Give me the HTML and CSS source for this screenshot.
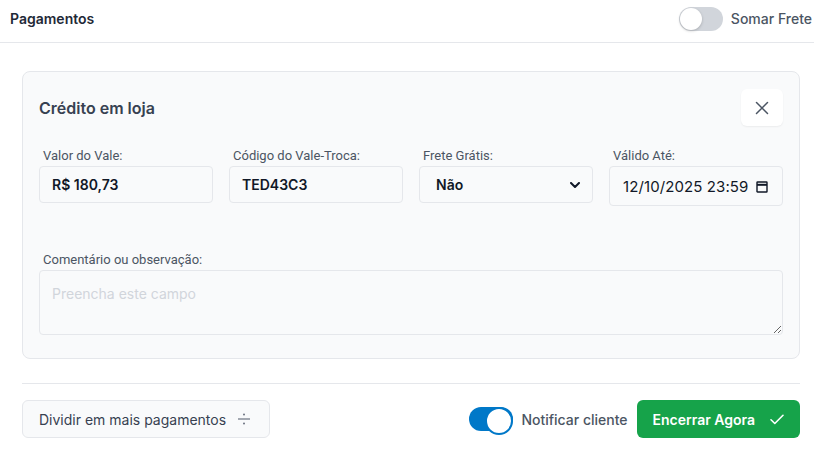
FILE: index.html
```html
<!DOCTYPE html>
<html lang="pt-BR">
<head>
    <meta charset="UTF-8">
    <meta name="viewport" content="width=device-width, initial-scale=1.0">
    <title>Pagamentos</title>
    <link rel="stylesheet" href="styles.css">
</head>
<body>
    <header class="topbar">
        <h2 class="topbar-title">Pagamentos</h2>
        <label class="switch-row">
            <span class="switch"></span>
            <span class="switch-label">Somar Frete</span>
        </label>
    </header>

    <main class="content">
        <section class="card">
            <div class="card-head">
                <h3 class="card-title">Crédito em loja</h3>
                <button class="close-btn" type="button" aria-label="Fechar">
                    <svg width="14" height="14" viewBox="0 0 14 14" fill="none" stroke="#4b5563" stroke-width="1.5" stroke-linecap="round">
                        <path d="M1.5 1.5l11 11M12.5 1.5l-11 11"/>
                    </svg>
                </button>
            </div>

            <div class="fields">
                <div class="field">
                    <label>Valor do Vale:</label>
                    <input class="input" type="text" value="R$ 180,73">
                </div>
                <div class="field">
                    <label>Código do Vale-Troca:</label>
                    <input class="input" type="text" value="TED43C3">
                </div>
                <div class="field">
                    <label>Frete Grátis:</label>
                    <div class="select-wrap">
                        <select class="input">
                            <option>Não</option>
                            <option>Sim</option>
                        </select>
                        <svg class="chevron" width="10" height="6" viewBox="0 0 10 6" fill="none" stroke="#111827" stroke-width="2" stroke-linecap="round" stroke-linejoin="round">
                            <path d="M1 1l4 4 4-4"/>
                        </svg>
                    </div>
                </div>
                <div class="field">
                    <label>Válido Até:</label>
                    <div class="input date-input">
                        <span class="date-value">12/10/2025 23:59</span>
                        <svg width="12" height="13" viewBox="0 0 12 13" fill="none" stroke="#111827" stroke-width="1.4">
                            <rect x="1" y="2" width="10" height="10" rx="0.5"/>
                            <path d="M1 4.8h10" stroke-width="2"/>
                        </svg>
                    </div>
                </div>
            </div>

            <div class="field comment">
                <label>Comentário ou observação:</label>
                <textarea class="input textarea" placeholder="Preencha este campo"></textarea>
            </div>
        </section>

        <hr class="divider">

        <footer class="actions">
            <button class="btn btn-light" type="button">
                Dividir em mais pagamentos
                <svg width="12" height="12" viewBox="0 0 12 12" fill="#6b7280">
                    <rect x="0" y="5.4" width="12" height="1.2"/>
                    <circle cx="6" cy="1.6" r="1"/>
                    <circle cx="6" cy="10.4" r="1"/>
                </svg>
            </button>
            <div class="actions-right">
                <label class="switch-row">
                    <span class="switch on"></span>
                    <span class="switch-label">Notificar cliente</span>
                </label>
                <button class="btn btn-green" type="button">
                    Encerrar Agora
                    <svg width="14" height="11" viewBox="0 0 14 11" fill="none" stroke="#fff" stroke-width="1.6" stroke-linecap="round" stroke-linejoin="round">
                        <path d="M1 5.8l3.8 3.7L13 1.3"/>
                    </svg>
                </button>
            </div>
        </footer>
    </main>
</body>
</html>
```

FILE: styles.css
```css
* {
    box-sizing: border-box;
}
body {
    margin: 0;
    font-family: Inter, "Noto Sans", sans-serif;
    color: #374151;
    background: #fff;
}
.topbar {
    display: flex;
    align-items: center;
    justify-content: space-between;
    height: 43px;
    padding: 0 2px 5px 10px;
    border-bottom: 1px solid #e5e7eb;
}
.topbar-title {
    margin: 0;
    font-size: 14px;
    font-weight: 600;
    color: #1f2937;
}
.switch-row {
    display: flex;
    align-items: center;
    gap: 8px;
}
.switch {
    position: relative;
    width: 44px;
    height: 24px;
    border-radius: 12px;
    background: #d1d5db;
}
.switch::after {
    content: "";
    position: absolute;
    top: 1px;
    left: 1px;
    width: 22px;
    height: 22px;
    border-radius: 50%;
    background: #fff;
    box-shadow: 0 1px 3px rgba(0, 0, 0, 0.2);
}
.switch.on {
    background: #0078c8;
}
.switch.on::after {
    top: 0;
    left: auto;
    right: 0;
    width: 24px;
    height: 24px;
    border: 2px solid #0078c8;
    box-shadow: none;
}
.switch-label {
    font-size: 14px;
    font-weight: 500;
    color: #4b5563;
}
.content {
    padding: 28px 14px 0 22px;
}
.card {
    background: #f9fafb;
    border: 1px solid #e5e7eb;
    border-radius: 8px;
    padding: 17px 16px 23px;
}
.card-head {
    display: flex;
    align-items: center;
    justify-content: space-between;
    margin-bottom: 22px;
}
.card-title {
    margin: 0;
    font-size: 16px;
    font-weight: 600;
    color: #374151;
}
.close-btn {
    display: flex;
    align-items: center;
    justify-content: center;
    width: 42px;
    height: 37px;
    border: none;
    border-radius: 6px;
    background: #fff;
    box-shadow: 0 1px 2px rgba(0, 0, 0, 0.06);
}
.fields {
    display: grid;
    grid-template-columns: repeat(4, 1fr);
    gap: 16px;
    align-items: start;
}
.field label {
    display: block;
    padding-left: 4px;
    margin-bottom: 3px;
    font-family: Roboto, sans-serif;
    font-size: 13px;
    line-height: 15px;
    color: #4b5563;
}
.input {
    width: 100%;
    height: 37px;
    padding: 0 12px;
    border: 1px solid #e5e7eb;
    border-radius: 4px;
    background: #f9fafb;
    font-family: inherit;
    font-size: 14px;
    font-weight: 600;
    color: #111827;
    outline: none;
}
.select-wrap {
    position: relative;
}
select.input {
    appearance: none;
    padding-left: 16px;
}
.chevron {
    position: absolute;
    right: 13px;
    top: 16px;
    pointer-events: none;
}
.date-input {
    display: flex;
    align-items: center;
    justify-content: space-between;
    height: 40px;
    padding: 0 14px 0 13px;
    font-weight: 400;
    font-size: 15px;
    letter-spacing: 0.1px;
}
.comment {
    margin-top: 46px;
}
.textarea {
    display: block;
    height: 65px;
    padding: 14px 12px;
    resize: vertical;
    font-weight: 400;
}
.textarea::placeholder {
    color: #d1d5db;
}
.divider {
    margin: 24px 0 16px;
    border: none;
    border-top: 1px solid #e5e7eb;
}
.actions {
    display: flex;
    align-items: center;
    justify-content: space-between;
}
.actions-right {
    display: flex;
    align-items: center;
    gap: 9px;
}
.btn {
    display: flex;
    align-items: center;
    gap: 10px;
    height: 38px;
    border-radius: 6px;
    font-family: inherit;
    font-size: 14px;
    font-weight: 500;
}
.btn-light {
    padding: 0 19px 0 16px;
    gap: 12px;
    border: 1px solid #e5e7eb;
    background: #f9fafb;
    color: #374151;
    font-weight: 400;
}
.btn-green {
    padding: 0 16px;
    gap: 15px;
    border: none;
    background: #16a34a;
    color: #fff;
    font-weight: 600;
}
```
